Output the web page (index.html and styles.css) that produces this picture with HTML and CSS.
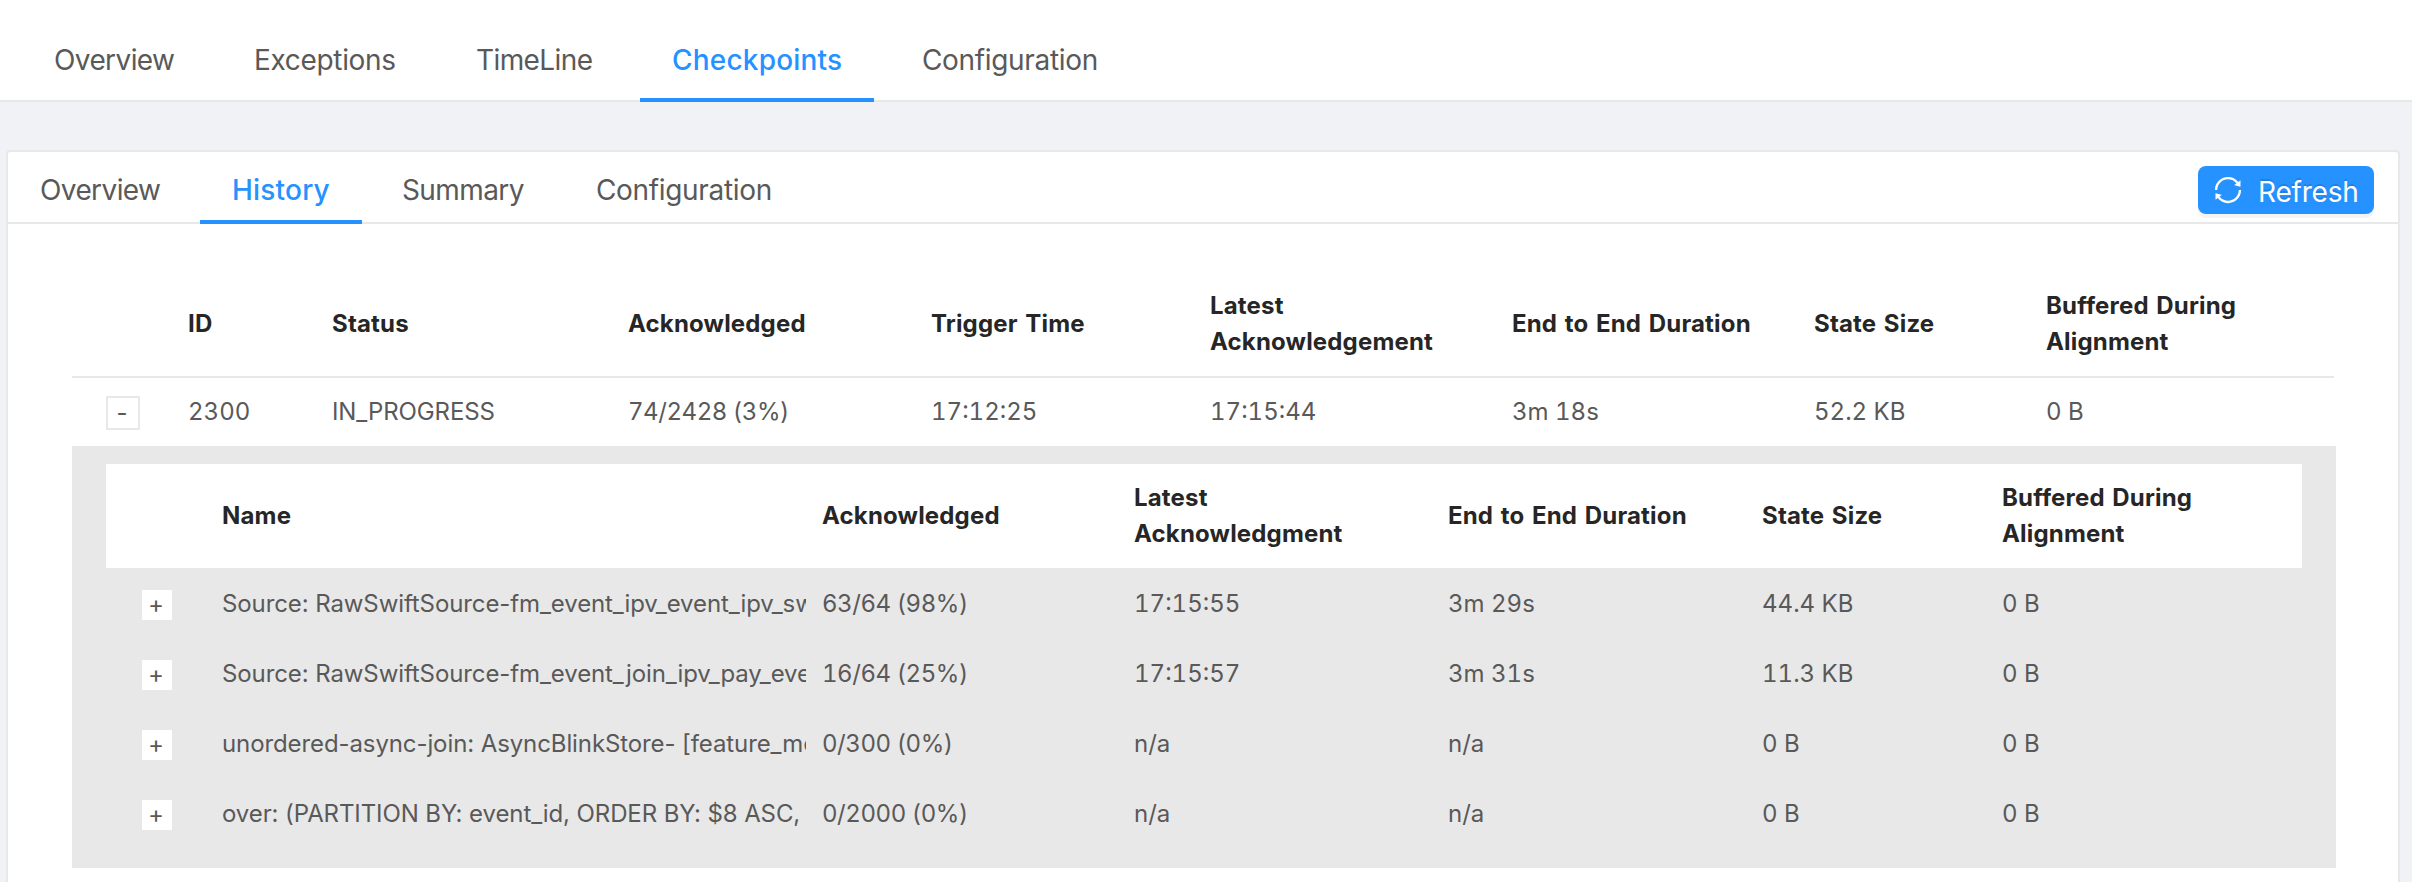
FILE: index.html
```html
<!DOCTYPE html>
<html lang="en">
<head>
<meta charset="utf-8">
<title>Checkpoints</title>
<link rel="stylesheet" href="styles.css">
</head>
<body>
<nav class="tabs tabs-main">
  <a class="tab tight"><span>Overview</span></a>
  <a class="tab"><span>Exceptions</span></a>
  <a class="tab tight"><span>TimeLine</span></a>
  <a class="tab active"><span>Checkpoints</span></a>
  <a class="tab"><span>Configuration</span></a>
</nav>
<main class="card">
  <div class="card-bar">
    <nav class="tabs tabs-sub">
      <a class="tab tight"><span>Overview</span></a>
      <a class="tab active"><span>History</span></a>
      <a class="tab tight"><span>Summary</span></a>
      <a class="tab"><span>Configuration</span></a>
    </nav>
    <button class="refresh">
      <svg viewBox="64 64 896 896" width="28" height="28" fill="currentColor"><path d="M168 504.2c1-43.7 10-86.1 26.9-126 17.3-41 42.1-77.7 73.7-109.4S337 212.3 378 195c42.4-17.9 87.4-27 133.9-27s91.5 9.1 133.8 27A341.5 341.5 0 0 1 755 268.8c9.9 9.9 19.2 20.4 27.8 31.4l-60.2 47a8 8 0 0 0 3 14.1l175.7 43c5 1.2 9.9-2.6 9.9-7.7l.8-180.9c0-6.7-7.7-10.5-12.9-6.3l-56.4 44.1C765.8 155.1 646.2 92 511.8 92 282.7 92 96.3 275.6 92 503.8a8 8 0 0 0 8 8.2h60c4.4 0 7.9-3.5 8-7.8zm756 7.8h-60c-4.4 0-7.9 3.5-8 7.8-1 43.7-10 86.1-26.9 126-17.3 41-42.1 77.8-73.7 109.4A342.45 342.45 0 0 1 512.1 856a342.24 342.24 0 0 1-243.2-100.8c-9.9-9.9-19.2-20.4-27.8-31.4l60.2-47a8 8 0 0 0-3-14.1l-175.7-43c-5-1.2-9.9 2.6-9.9 7.7l-.7 181c0 6.7 7.7 10.5 12.9 6.3l56.4-44.1C258.2 868.9 377.8 932 512.2 932c229.2 0 415.5-183.7 419.8-411.8a8 8 0 0 0-8-8.2z"/></svg>
      <span>Refresh</span>
    </button>
  </div>
  <section class="history-table">
    <div class="row head outer">
      <span></span><span>ID</span><span>Status</span><span>Acknowledged</span><span>Trigger Time</span><span>Latest<br>Acknowledgement</span><span>End to End Duration</span><span>State Size</span><span>Buffered During<br>Alignment</span>
    </div>
    <div class="row body outer">
      <span class="toggle">-</span><span>2300</span><span class="status">IN_PROGRESS</span><span class="ack">74/2428 (3%)</span><span>17:12:25</span><span>17:15:44</span><span>3m 18s</span><span>52.2 KB</span><span>0 B</span>
    </div>
    <div class="detail">
      <div class="row head inner">
        <span></span><span>Name</span><span>Acknowledged</span><span>Latest<br>Acknowledgment</span><span>End to End Duration</span><span>State Size</span><span>Buffered During<br>Alignment</span>
      </div>
      <div class="row body inner">
        <span class="toggle">+</span><span class="name">Source: RawSwiftSource-fm_event_ipv_event_ipv_sw</span><span class="ack">63/64 (98%)</span><span>17:15:55</span><span>3m 29s</span><span>44.4 KB</span><span>0 B</span>
      </div>
      <div class="row body inner">
        <span class="toggle">+</span><span class="name">Source: RawSwiftSource-fm_event_join_ipv_pay_eve</span><span class="ack">16/64 (25%)</span><span>17:15:57</span><span>3m 31s</span><span>11.3 KB</span><span>0 B</span>
      </div>
      <div class="row body inner">
        <span class="toggle">+</span><span class="name">unordered-async-join: AsyncBlinkStore- [feature_mo</span><span class="ack">0/300 (0%)</span><span>n/a</span><span>n/a</span><span>0 B</span><span>0 B</span>
      </div>
      <div class="row body inner">
        <span class="toggle">+</span><span class="name">over: (PARTITION BY: event_id, ORDER BY: $8 ASC,</span><span class="ack">0/2000 (0%)</span><span>n/a</span><span>n/a</span><span>0 B</span><span>0 B</span>
      </div>
    </div>
  </section>
</main>
</body>
</html>
```
FILE: styles.css
```css
* { box-sizing: border-box; }
html, body { height: 100%; overflow: hidden; }
body {
  margin: 0;
  background: #f0f2f5;
  color: #595959;
  font-family: Inter, "Liberation Sans", sans-serif;
  font-size: 24px;
  line-height: 36px;
  font-variant-numeric: tabular-nums;
}

/* Tab bars */
.tabs { display: grid; font-size: 28px; line-height: 42px; letter-spacing: -0.33px; }
.tab { padding-left: 32px; white-space: nowrap; }
.tight { letter-spacing: -0.6px; }
.active { color: #2692ff; font-weight: 500; letter-spacing: 0.2px; border-bottom: 4px solid #2692ff; }
.tabs-main {
  grid-template-columns: 184px 206px 180px 234px 240px;
  column-gap: 16px;
  height: 102px;
  padding-left: 22px;
  background: #fff;
  box-shadow: inset 0 -2px #e8e8e8;
}
.tabs-main .tab { padding-top: 39px; }

.card {
  height: 732px;
  margin: 48px 12px 0 6px;
  background: #fff;
  border: 2px solid #e8e8e8;
  border-bottom: 0;
  border-radius: 4px 4px 0 0;
}
.card-bar {
  display: flex;
  justify-content: space-between;
  height: 72px;
  padding-right: 24px;
  box-shadow: inset 0 -2px #e8e8e8;
}
.tabs-sub { grid-template-columns: 184px 162px 186px 240px; column-gap: 8px; }
.tabs-sub .tab { padding-top: 17px; }

.refresh {
  display: flex;
  align-items: center;
  gap: 16px;
  width: 176px;
  height: 48px;
  margin-top: 14px;
  padding: 0 0 0 16px;
  border: 0;
  border-radius: 8px;
  background: #2692ff;
  box-shadow: 0 4px 0 rgba(0, 0, 0, 0.045);
  color: #fff;
  font: 400 28px/42px Inter, sans-serif;
  letter-spacing: -0.2px;
  text-shadow: 0 -2px 0 rgba(0, 0, 0, 0.12);
}
.refresh span { padding-top: 4px; }

/* Checkpoint history */
.history-table { width: 2264px; margin: 48px 0 0 64px; }
.row { display: grid; align-items: center; white-space: nowrap; }
.outer { grid-template-columns: 116px 144px 296px 303px 279px 302px 302px 232px 1fr; }
.inner { grid-template-columns: 116px 600px 312px 314px 314px 240px 1fr; }
.head { color: #262626; font-weight: 700; letter-spacing: 0.17px; word-spacing: 1px; height: 104px; }
.head.outer { width: 2262px; height: 106px; border-bottom: 2px solid #e8e8e8; }
.body.outer { height: 68px; }
.body.inner { height: 70px; padding-top: 2px; }
.head.inner { background: #fff; }
.detail { height: 422px; padding: 18px 34px; background: #e8e8e8; }
.name {
  width: 584px;
  overflow: hidden;
  font-variant-numeric: normal;
  letter-spacing: -0.1px;
}
.ack { letter-spacing: -0.45px; }
.status { letter-spacing: -0.1px; }

.toggle {
  width: 34px;
  height: 34px;
  margin: 2px 0 0 34px;
  padding-right: 2px;
  border: 2px solid #e8e8e8;
  background: #fff;
  line-height: 30px;
  text-align: center;
}
```
